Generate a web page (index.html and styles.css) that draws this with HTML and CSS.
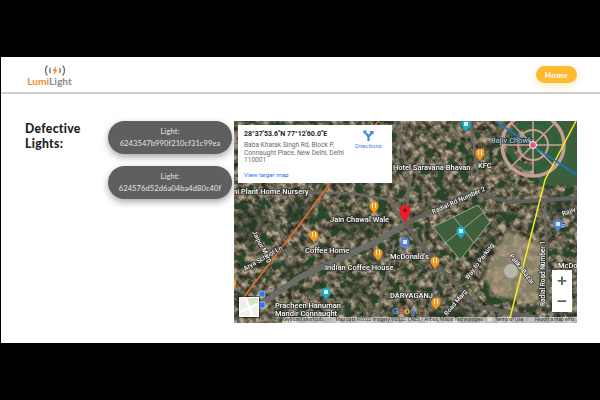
FILE: index.html
```html
<!DOCTYPE html>
<html lang="en">
<head>
<meta charset="utf-8">
<title>LumiLight</title>
<link rel="stylesheet" href="styles.css">
</head>
<body>
<main class="page">
  <header class="topbar">
    <div class="logo">
      <svg class="logo-icon" viewBox="0 0 22 11" aria-hidden="true">
        <path class="arc" d="M3 1C1 3.500 1 7.500 3 10"/>
        <path class="arc" d="M19 1C21 3.500 21 7.500 19 10"/>
        <path class="arc" d="M6.200 3.500C5.600 4.600 5.600 6.400 6.200 7.500"/>
        <path class="arc" d="M15.800 3.500C16.400 4.600 16.400 6.400 15.800 7.500"/>
        <path class="bolt" d="M12.500 0.500L8.500 6H10.800L9.500 10.500L13.500 4.800H11.200Z"/>
      </svg>
      <div class="logo-text"><span class="logo-a">Lumi</span><span class="logo-b">Light</span></div>
    </div>
    <a class="home-btn">Home</a>
  </header>
  <section class="content">
    <h1 class="title">Defective Lights:</h1>
    <div class="lights">
      <div class="pill"><span>Light:</span><span>6243547b990f210cf31c99ea</span></div>
      <div class="pill"><span>Light:</span><span>624576d52d6a04ba4d80c40f</span></div>
    </div>
    <div class="map">
      <svg class="sat" viewBox="234 121 343 202" aria-hidden="true">
        <defs>
          <filter id="mottle" x="0" y="0" width="100%" height="100%" color-interpolation-filters="sRGB">
            <feTurbulence type="fractalNoise" baseFrequency="0.16" numOctaves="4" seed="11"/>
            <feColorMatrix type="matrix" values="1.9 0 0 0 -0.4  1.9 0 0 0 -0.4  1.9 0 0 0 -0.4  0 0 0 0 1"/>
            <feComponentTransfer>
              <feFuncR type="table" tableValues="0.16 0.28 0.42 0.56 0.72"/>
              <feFuncG type="table" tableValues="0.17 0.28 0.40 0.52 0.66"/>
              <feFuncB type="table" tableValues="0.14 0.22 0.32 0.43 0.56"/>
            </feComponentTransfer>
          </filter>
          <filter id="canopy" x="0" y="0" width="100%" height="100%" color-interpolation-filters="sRGB">
            <feTurbulence type="fractalNoise" baseFrequency="0.085" numOctaves="3" seed="29" result="n"/>
            <feColorMatrix in="n" type="matrix" values="0 0 0 0 0.15  0 0 0 0 0.27  0 0 0 0 0.16  7 0 0 0 -3.85"/>
          </filter>
          <filter id="soft"><feGaussianBlur stdDeviation="1.500"/></filter>
          <filter id="soft2"><feGaussianBlur stdDeviation="0.400"/></filter>
          <pattern id="blocks" width="14" height="9" patternUnits="userSpaceOnUse" patternTransform="rotate(-35)">
            <rect class="blk-a" width="14" height="9"/>
            <path class="blk-l" d="M0 0H14M5 0V9M11 0V9"/>
          </pattern>
          <g id="pin-o"><path class="pin-orange" d="M0 0C-1-3-4.500-4-4.500-8A4.500 4.500 0 0 1 4.500-8C4.500-4 1-3 0 0Z"/><path class="pin-mark" d="M-1.500-11V-6M1.500-11V-6"/></g>
          <g id="pin-t"><path class="pin-teal" d="M0 0C-1-3-4.500-4-4.500-8A4.500 4.500 0 0 1 4.500-8C4.500-4 1-3 0 0Z"/><rect class="pin-box" x="-2" y="-10" width="4" height="4"/></g>
          <g id="pin-b"><path class="pin-blue" d="M0 0C-1-3-4.500-4-4.500-8A4.500 4.500 0 0 1 4.500-8C4.500-4 1-3 0 0Z"/><rect class="pin-box" x="-2" y="-10" width="4" height="4"/></g>
        </defs>
        <rect x="234" y="121" width="343" height="202" filter="url(#mottle)"/>
        <rect x="234" y="121" width="343" height="202" fill="url(#blocks)"/>
        <rect x="234" y="121" width="343" height="202" filter="url(#canopy)"/>
        <path class="sand" filter="url(#soft)" d="M483 277L507 230 543 247 537 303 497 297Z"/>

        <g filter="url(#soft)">
          <ellipse class="tree" cx="355" cy="225" rx="22" ry="11"/>
          <ellipse class="tree" cx="250" cy="225" rx="16" ry="18"/>
          <ellipse class="tree" cx="300" cy="212" rx="16" ry="10"/>
          <ellipse class="tree" cx="292" cy="272" rx="12" ry="8"/>
          <ellipse class="tree" cx="355" cy="290" rx="12" ry="10"/>
          <ellipse class="tree" cx="510" cy="128" rx="12" ry="6"/>
          <ellipse class="tree" cx="560" cy="205" rx="16" ry="8"/>
          <ellipse class="tree" cx="452" cy="312" rx="24" ry="5"/>
          <ellipse class="tree" cx="485" cy="250" rx="6" ry="18" transform="rotate(35 485 250)"/>
        </g>

        <g filter="url(#soft2)">
          <path class="road" d="M248 313L300 277 380 240 405 224"/>
          <path class="road-n" d="M405 224L425 214 470 192 510 202 577 198"/>
          <path class="road-n" d="M405 224L440 268 478 307 540 318"/>
          <path class="road-t" d="M234 193H350L390 200 405 224"/>
          <path class="road-t" d="M395 121L410 180 405 224"/>
          <path class="road-t" d="M470 121L478 170 470 192"/>
          <path class="road-t" d="M545 200L548 305"/>
          <path class="road-t" d="M440 268L425 323"/>
          <path class="road-t" d="M265 205L295 260"/>
          <path class="road-t" d="M395 240L375 323"/>

          <path class="garden" d="M433 227L478 205 490 222 460 260Z"/>
          <path class="garden-line" d="M433 227L478 205 490 222 460 260ZM452 215L474 243M445 243L484 212"/>

          <path class="corner" d="M520 121H577V185H540Z"/>
          <circle class="ring-out" cx="533" cy="145" r="31"/>
          <circle class="ring-green" cx="533" cy="145" r="23"/>
          <circle class="ring-pink" cx="533" cy="145" r="15"/>
          <circle class="ring-green" cx="533" cy="145" r="10"/>
          <path class="ring-path" d="M533 114V176M502 145H564M511 123L555 167M555 123L511 167"/>
          <circle class="stadium" cx="511" cy="271" r="7.500"/>
        </g>

        <path class="line-orange" d="M240 302L303 220 330 183 395 100"/>
        <path class="line-yellow" d="M576 121L545 180 510 318"/>
        <path class="line-blue" d="M495 121L577 175"/>

        <g class="labels">
          <text x="233" y="194">ni Plant Home Nursery</text>
          <text x="330" y="222">Jain Chawal Wale</text>
          <text x="305" y="253">Coffee Home</text>
          <text x="325" y="270">Indian Coffee House</text>
          <text x="275" y="308">Pracheen Hanuman</text>
          <text x="275" y="316">Mandir Connaught</text>
          <text x="393" y="170">Hotel Saravana Bhavan</text>
          <text x="390" y="259">McDonald's</text>
          <text x="390" y="298">DARYAGANJ</text>
          <text x="491" y="143" class="l-metro">Rajiv Chowk</text>
          <text x="478" y="168">KFC</text>
          <text x="558" y="268">McDo</text>
          <text x="558" y="228" class="l-small">CP</text>
          <g class="l-road">
            <text transform="translate(245 271) rotate(-30)">Arya School Ln</text>
            <text transform="translate(252 232) rotate(62)">Jaipur Marg</text>
            <text transform="translate(433 214) rotate(-24)">Radial Rd Number 2</text>
            <text transform="translate(468 280) rotate(-53)">Way to Parking</text>
            <text transform="translate(509 256) rotate(52)">Palika Bazar</text>
            <text transform="translate(545 306) rotate(-90)">Radial Road Number 1</text>
            <text transform="translate(563 216) rotate(-20)">Rajiv</text>
            <text transform="translate(447 316) rotate(-50)">Road Marg</text>
          </g>
        </g>

        <use href="#pin-o" x="374" y="214"/>
        <use href="#pin-o" x="314" y="243"/>
        <use href="#pin-o" x="378" y="261"/>
        <use href="#pin-o" x="435" y="269"/>
        <use href="#pin-o" x="436" y="310"/>
        <use href="#pin-o" x="480" y="161"/>
        <use href="#pin-o" x="232" y="291"/>
        <use href="#pin-t" x="461" y="239"/>
        <use href="#pin-t" x="466" y="132"/>
        <use href="#pin-t" x="326" y="300"/>
        <use href="#pin-b" x="405" y="250"/>
        <use href="#pin-b" x="558" y="232"/>
        <circle class="metro" cx="533" cy="145" r="3.500"/>
        <rect class="bus" x="259" y="291" width="6" height="6" rx="1"/>
        <rect class="bus" x="259" y="302" width="6" height="6" rx="1"/>

        <path class="pin-red" d="M405 223C403.500 218.500 399.500 216.500 399.500 210.500A5.500 5.500 0 0 1 410.500 210.500C410.500 216.500 406.500 218.500 405 223Z"/>
        <circle class="pin-red-dot" cx="405" cy="210.500" r="2"/>
      </svg>

      <div class="info">
        <div class="info-main">
          <div class="coords">28°37'53.6"N 77°12'60.0"E</div>
          <div class="address">Baba Kharak Singh Rd, Block P, Connaught Place, New Delhi, Delhi 110001</div>
          <div class="larger">View larger map</div>
        </div>
        <div class="directions">
          <svg class="dir-icon" viewBox="0 0 12 12" aria-hidden="true">
            <path d="M0.500 0.500H4.500L3.200 1.800 6 5.200 8.400 2.400 7 1H11.500V5.500L10.100 4.100 7.200 7.600V12H4.800V7.600L1.700 3.300 0.500 4.500Z"/>
          </svg>
          <span>Directions</span>
        </div>
      </div>

      <div class="thumb">
        <svg viewBox="0 0 20 20" aria-hidden="true">
          <rect class="th-bg" width="20" height="20"/>
          <path class="th-park" d="M8 0H20V7L12 10Z"/>
          <path class="th-road" d="M0 16L20 6M6 0L14 20"/>
        </svg>
      </div>

      <div class="glogo"><span class="g1">G</span><span class="g2">o</span><span class="g3">o</span><span class="g1">g</span><span class="g4">l</span><span class="g2">e</span></div>

      <div class="zoom">
        <div class="zoom-btn">+</div>
        <div class="zoom-btn">−</div>
      </div>

      <div class="attrib">
        <span>Keyboard shortcuts</span>
        <span>Map data ©2022 Imagery ©2022, CNES / Airbus, Maxar Technologies</span>
        <span>Terms of Use</span>
        <span>Report a map error</span>
      </div>
    </div>
  </section>
</main>
</body>
</html>
```

FILE: styles.css
```css
* { box-sizing: border-box; }
html, body { margin: 0; height: 100%; }
body {
  background: #000;
  padding: 57px 0;
  width: 600px;
  height: 400px;
  overflow: hidden;
  font-family: "Lato", "Liberation Sans", sans-serif;
}
.page {
  height: 286px;
  margin-left: 1px;
  background: #fff;
}
.topbar {
  height: 37px;
  padding: 8px 23px 0 26px;
  border-bottom: 2px solid #d0d0d0;
  display: flex;
  justify-content: space-between;
  align-items: flex-start;
}
.logo { display: flex; flex-direction: column; align-items: center; width: 45px; }
.logo-icon { width: 22px; height: 11px; display: block; margin-left: 10px; }
.arc { fill: none; stroke: #6d6d6d; stroke-width: 1.3; stroke-linecap: round; }
.bolt { fill: #f58220; }
.logo-text { font-size: 10.2px; line-height: 11px; font-weight: 700; white-space: nowrap; }
.logo-a { color: #f58a2e; }
.logo-b { color: #8a8a8a; }
.home-btn {
  margin-top: 1px;
  width: 41px;
  height: 17px;
  border-radius: 9px;
  background: #fdbb2d;
  color: #fff;
  font-size: 8px;
  font-weight: 900;
  letter-spacing: 0.5px;
  display: flex;
  align-items: center;
  justify-content: center;
  box-shadow: 0 3px 8px rgba(253, 187, 45, 0.3);
}
.content {
  display: flex;
  padding: 27px 0 0 24px;
}
.title {
  width: 83px;
  margin: 0;
  font-size: 12.2px;
  line-height: 15px;
  font-weight: 900;
  letter-spacing: 0.3px;
  color: #222;
}
.lights {
  width: 124px;
  margin-right: 2px;
  display: flex;
  flex-direction: column;
  gap: 12px;
}
.pill {
  height: 33px;
  border-radius: 17px;
  background: #5f5f5f;
  color: #e6e6e6;
  font-size: 7.5px;
  line-height: 12px;
  letter-spacing: 0.1px;
  display: flex;
  flex-direction: column;
  align-items: center;
  justify-content: center;
  box-shadow: 0 3px 7px rgba(0, 0, 0, 0.35);
}
.map {
  position: relative;
  width: 343px;
  height: 202px;
  overflow: hidden;
  background: #555;
}
.sat { display: block; width: 343px; height: 202px; filter: blur(0.35px); }
.blk-a { fill: none; }
.blk-l { fill: none; stroke: #1c1c1a; stroke-width: 1.2; stroke-opacity: 0.35; }
.tree { fill: #1f3320; opacity: 0.5; }
.sand { fill: #ab9b80; opacity: 0.7; }
.road { fill: none; stroke: #6c6c68; stroke-width: 6; }
.road-n { fill: none; stroke: #62625e; stroke-width: 4; }
.road-t { fill: none; stroke: #6b6a64; stroke-width: 2.5; }
.garden { fill: #3f5f3a; }
.garden-line { fill: none; stroke: #9aa98d; stroke-width: 1; }
.corner { fill: #3a5f3c; }
.ring-out { fill: none; stroke: #c39f92; stroke-width: 3.5; }
.ring-green { fill: none; stroke: #2e6136; stroke-width: 5; }
.ring-pink { fill: none; stroke: #cda195; stroke-width: 2; }
.ring-path { fill: none; stroke: #cda195; stroke-width: 1.5; }
.stadium { fill: #b8b7a8; stroke: #8b8a7d; }
.line-orange { fill: none; stroke: #ef6c2b; stroke-width: 1.5; }
.line-yellow { fill: none; stroke: #f8ea2c; stroke-width: 1.5; }
.line-blue { fill: none; stroke: #1976c8; stroke-width: 1.5; }
.labels text {
  font-family: "Roboto", "Liberation Sans", sans-serif;
  font-size: 7.5px;
  font-weight: 500;
  fill: #fff;
  stroke: #222;
  stroke-width: 1.4px;
  stroke-opacity: 0.75;
  paint-order: stroke;
}
.labels .l-metro { fill: #9fc9e4; }
.labels .l-small { font-size: 6px; }
.l-road text { font-size: 6.5px; }
.pin-orange { fill: #ef9a1c; }
.pin-teal { fill: #16aeca; }
.pin-blue { fill: #4f86e8; }
.pin-mark { stroke: #fff; stroke-width: 0.8; fill: none; }
.pin-box { fill: #fff; opacity: 0.8; }
.metro { fill: #e35a78; stroke: #fff; stroke-width: 1; }
.bus { fill: #2f78e8; stroke: #fff; stroke-width: 0.5; }
.pin-red { fill: #ea1d2c; }
.pin-red-dot { fill: #a3101b; }
.info {
  position: absolute;
  left: 4px;
  top: 4px;
  width: 154px;
  height: 58px;
  padding: 5px 6px;
  background: #fff;
  display: flex;
  font-family: "Roboto", "Liberation Sans", sans-serif;
}
.info-main { width: 103px; }
.coords { font-size: 7px; line-height: 9px; font-weight: 700; color: #222; white-space: nowrap; }
.address { margin-top: 3px; font-size: 6.6px; line-height: 7.5px; color: #6b6b6b; }
.larger { margin-top: 7px; font-size: 6.2px; line-height: 7px; color: #1a73e8; }
.directions {
  margin-left: 8px;
  display: flex;
  flex-direction: column;
  align-items: center;
  gap: 1px;
  font-size: 6px;
  line-height: 7px;
  color: #3f83e8;
}
.dir-icon { width: 11px; height: 11px; fill: #3f83e8; display: block; }
.thumb {
  position: absolute;
  left: 5px;
  top: 176px;
  width: 20px;
  height: 20px;
  border: 1px solid #fff;
  outline: 1px solid rgba(0, 0, 0, 0.4);
}
.thumb svg { display: block; width: 100%; height: 100%; }
.th-bg { fill: #eef0ea; }
.th-park { fill: #cfe5c4; }
.th-road { fill: none; stroke: #fff; stroke-width: 2; }
.glogo {
  position: absolute;
  left: 158px;
  top: 185px;
  font-family: "Liberation Sans", sans-serif;
  font-size: 9px;
  line-height: 10px;
  font-weight: 700;
}
.g1 { color: #5b8def; }
.g2 { color: #e5544b; }
.g3 { color: #f5c02e; }
.g4 { color: #3fae5a; }
.zoom {
  position: absolute;
  right: 5px;
  top: 149px;
  width: 20px;
  height: 42px;
  background: #fff;
  display: flex;
  flex-direction: column;
}
.zoom-btn {
  flex: 1;
  display: flex;
  align-items: center;
  justify-content: center;
  font-family: "Liberation Sans", sans-serif;
  font-size: 17px;
  line-height: 1;
  font-weight: 700;
  color: #666;
}
.attrib {
  position: absolute;
  right: 0;
  bottom: 0;
  width: 295px;
  height: 6px;
  padding-right: 2px;
  display: flex;
  justify-content: space-between;
  background: rgba(255, 255, 255, 0.6);
  font-family: "Roboto", "Liberation Sans", sans-serif;
  font-size: 4.8px;
  line-height: 6px;
  color: #333;
  white-space: nowrap;
}
```
